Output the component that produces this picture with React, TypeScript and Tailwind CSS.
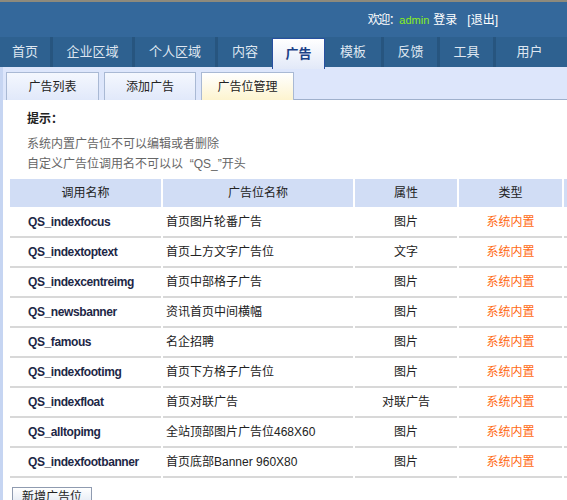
const NAV = [
  { label: '首页', w: 'w-[50px]' },
  { label: '企业区域', w: 'w-[82px]' },
  { label: '个人区域', w: 'w-[83px]' },
  { label: '内容', w: 'w-[57px]' },
  { label: '广告', w: 'w-[53px]', active: true },
  { label: '模板', w: 'w-[56px]' },
  { label: '反馈', w: 'w-[56px]' },
  { label: '工具', w: 'w-[56px]' },
  { label: '用户', w: 'w-[70px]' },
];

const ROWS = [
  ['QS_indexfocus', '首页图片轮番广告', '图片'],
  ['QS_indextoptext', '首页上方文字广告位', '文字'],
  ['QS_indexcentreimg', '首页中部格子广告', '图片'],
  ['QS_newsbanner', '资讯首页中间横幅', '图片'],
  ['QS_famous', '名企招聘', '图片'],
  ['QS_indexfootimg', '首页下方格子广告位', '图片'],
  ['QS_indexfloat', '首页对联广告', '对联广告'],
  ['QS_alltopimg', '全站顶部图片广告位468X60', '图片'],
  ['QS_indexfootbanner', '首页底部Banner 960X80', '图片'],
];

const cjk = "font-['Liberation_Sans','Noto_Sans_CJK_SC',sans-serif]";

export default function App() {
  return (
    <div className={`w-[567px] h-[500px] overflow-hidden bg-white text-[12px] ${cjk}`}>
      {/* ── Header ───────────────────────────── */}
      <div className="h-[37px] bg-[#34689b] border-t-2 border-[#8e8a7c] flex items-center justify-end pr-[69px] pt-[1px] text-white text-[12px]">
        <span className="tracking-[-1.5px]">欢迎：</span>
        <span className="text-[#88f01c] text-[11px]">admin</span>
        <span className="ml-[4px]">登录</span>
        <span className="ml-[10px]">[退出]</span>
      </div>

      {/* ── Main nav ─────────────────────────── */}
      <div className="h-[30px] bg-[#2e6190] flex whitespace-nowrap">
        {NAV.map((n, i) => (
          <div
            key={n.label}
            className={[
              'shrink-0 flex items-center justify-center text-[13px]',
              n.w,
              i > 0 && !n.active && !NAV[i - 1].active ? 'border-l-[3px] border-[#27557f]' : '',
              n.active
                ? 'bg-gradient-to-b from-white to-[#e2e9f8] text-[#1a3f86] font-bold border border-[#2750a0] border-b-0 h-[31px] mt-[1px]'
                : 'text-[#dfe7f1]',
            ].join(' ')}
          >
            {n.label}
          </div>
        ))}
      </div>

      {/* ── Sub tabs ─────────────────────────── */}
      <div className="h-[33px] bg-[#dde6fb] flex items-end pl-[3px] border-l-[3px] border-[#c6d5f2]">
        <div className="flex items-end h-[28px] gap-[5px]">
          <div className="w-[93px] h-[28px] border border-[#a9b9d4] border-b-0 bg-gradient-to-b from-[#f4f7fe] to-[#e1e9fa] flex items-center justify-center text-[#222]">
            广告列表
          </div>
          <div className="w-[92px] h-[28px] border border-[#a9b9d4] border-b-0 bg-gradient-to-b from-[#f4f7fe] to-[#e1e9fa] flex items-center justify-center text-[#222]">
            添加广告
          </div>
          <div className="w-[93px] h-[28px] border border-[#a9b9d4] border-b-0 bg-gradient-to-b from-white to-[#fdf4cf] flex items-center justify-center text-[#222]">
            广告位管理
          </div>
        </div>
        <div className="flex-1 border-b border-[#9fb0cc]" />
      </div>

      {/* ── Content ──────────────────────────── */}
      <div className="border-l-[3px] border-[#c6d5f2] pl-[7px] pt-[12px]">
        <div className="pl-[17px] text-[#222]">
          <p className="font-bold h-[14px] leading-[14px]">提示：</p>
          <p className="mt-[8px] text-[#666] leading-[20px]">系统内置广告位不可以编辑或者删除</p>
          <p className="text-[#666] leading-[20px]">自定义广告位调用名不可以以 &nbsp;“QS_”开头</p>
        </div>

        <table className="mt-[5px] border-collapse table-fixed w-[600px]">
          <colgroup>
            <col className="w-[152px]" />
            <col className="w-[192px]" />
            <col className="w-[104px]" />
            <col className="w-[105px]" />
            <col className="w-[47px]" />
          </colgroup>
          <thead>
            <tr className="h-[28px] bg-[#d1ddf5] text-[#222]">
              <th className="font-normal border-r-2 border-white">调用名称</th>
              <th className="font-normal border-r-2 border-white">广告位名称</th>
              <th className="font-normal border-r-2 border-white">属性</th>
              <th className="font-normal border-r-2 border-white">类型</th>
              <th className="font-normal" />
            </tr>
          </thead>
          <tbody>
            {ROWS.map(([code, name, attr]) => (
              <tr key={code} className="h-[30px] border-b-2 border-[#d8d8d8]">
                <td className="pl-[18px] font-bold text-[12px] tracking-[-0.4px] text-[#1d2746] border-r-2 border-white">{code}</td>
                <td className="pl-[3px] text-[#222] whitespace-nowrap overflow-hidden border-r-2 border-white">{name}</td>
                <td className="text-center text-[#222] border-r-2 border-white">{attr}</td>
                <td className="text-center text-[#ff6a13] border-r-2 border-white">系统内置</td>
                <td />
              </tr>
            ))}
          </tbody>
        </table>

        <div className="mt-[9px] ml-[2px] w-[80px] h-[20px] border border-[#8f9bb0] bg-gradient-to-b from-white to-[#dfe6f2] flex items-center justify-center text-[#222]">
          新增广告位
        </div>
      </div>
    </div>
  );
}
